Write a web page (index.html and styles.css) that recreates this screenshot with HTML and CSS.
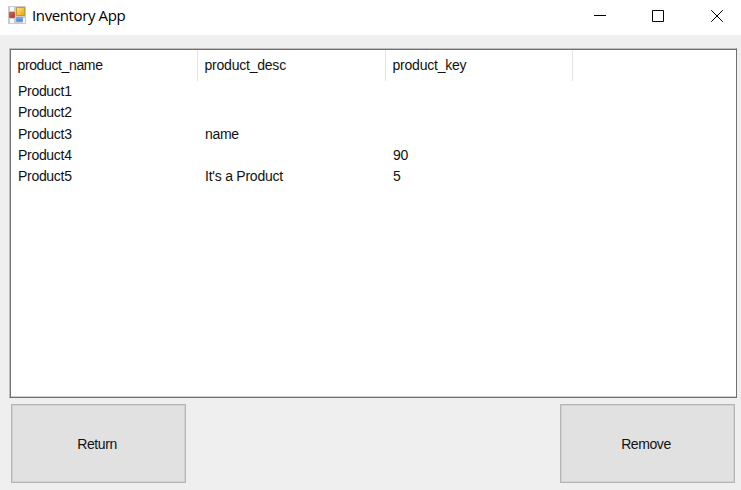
FILE: index.html
```
<!DOCTYPE html>
<html lang="en">
<head>
<meta charset="utf-8">
<title>Inventory App</title>
<link rel="stylesheet" href="styles.css">
</head>
<body>
<header class="titlebar">
  <svg class="app-icon" width="18" height="18" viewBox="0 0 18 18">
    <defs>
      <linearGradient id="gold" x2="1" y2="1"><stop stop-color="#ffe486"/><stop offset="1" stop-color="#e8a400"/></linearGradient>
      <linearGradient id="red" x2="1" y2="1"><stop stop-color="#df6a58"/><stop offset="1" stop-color="#b32418"/></linearGradient>
      <linearGradient id="blue" x2="0" y2="1"><stop stop-color="#83b8fb"/><stop offset="1" stop-color="#3b78dc"/></linearGradient>
    </defs>
    <path fill="#cbcbcb" d="M0 0h18v18H0z"/>
    <path fill="#f7f7f7" d="M2 1h4v4H2zM2 13h4v4H2zM15 12h2v5h-2z"/>
    <path fill="url(#gold)" stroke="#c39a35" d="M8.500 1.500h8v8h-8z"/>
    <path fill="url(#red)" stroke="#b8584a" d="M1.500 6.500h5v5h-5z"/>
    <path fill="url(#blue)" stroke="#7aa2e0" d="M8.500 11.500h6v4h-6z"/>
  </svg>
  <h1 class="title">Inventory App</h1>
  <div class="controls">
    <svg width="12" height="12" viewBox="0 0 12 12"><path d="M0 5.500h12"/></svg>
    <svg width="12" height="12" viewBox="0 0 12 12"><path d="M.5.500h11v11H.5z"/></svg>
    <svg class="close" width="12" height="12" viewBox="0 0 12 12"><path d="M.2.200l11.600 11.600M11.800.200L.2 11.800"/></svg>
  </div>
</header>
<main class="content">
  <section class="list">
    <div class="row head"><span>product_name</span><span class="desc">product_desc</span><span class="desc">product_key</span></div>
    <div class="row"><span>Product1</span></div>
    <div class="row"><span>Product2</span></div>
    <div class="row"><span>Product3</span><span>name</span></div>
    <div class="row"><span>Product4</span><span></span><span>90</span></div>
    <div class="row"><span>Product5</span><span class="phrase">It's a Product</span><span>5</span></div>
  </section>
  <div class="actions">
    <button>Return</button>
    <button>Remove</button>
  </div>
</main>
</body>
</html>
```
FILE: styles.css
```
* { box-sizing: border-box; }
body {
  margin: 0;
  width: 741px;
  height: 490px;
  overflow: hidden;
  background: #efefef;
  color: #111;
  font: 14px "Liberation Sans", Arial, sans-serif;
}
.titlebar {
  display: flex;
  align-items: flex-start;
  height: 35px;
  padding: 6px 18px 0 8px;
  background: #fff;
}
.title {
  margin: -1px 0 0 6px;
  font: 15px/20px "Open Sans", sans-serif;
  letter-spacing: -.38px;
  color: #000;
}
.controls {
  display: flex;
  gap: 46px;
  margin: 4px 0 0 auto;
}
.controls svg { fill: none; stroke: #000; stroke-width: 1; }
.controls .close { margin-left: 1px; }
.content { padding: 13px 4px 0 9px; }
.list {
  height: 350px;
  border: 1px solid #bdbdbd;
  border-right-color: #707070;
  border-bottom-color: #707070;
  box-shadow: inset 1px 1px #707070, inset 0 -1px #cfcfcf;
  background: #fff;
  padding: 1px 0 0 1px;
}
.row {
  display: grid;
  grid-template-columns: 187px 188px 187px;
  height: 21.3px;
  line-height: 21px;
  letter-spacing: -.3px;
}
.row span { padding-left: 7px; white-space: nowrap; }
.row.head { height: 30px; line-height: 31px; letter-spacing: -.37px; margin-bottom: 1px; }
.head span { border-right: 1px solid #e4e4e4; padding-left: 6.500px; }
.head .desc { letter-spacing: -.22px; }
.row .phrase { letter-spacing: -.24px; }
.actions {
  display: flex;
  justify-content: space-between;
  padding: 6px 2px 0 2px;
}
button {
  width: 175px;
  height: 79px;
  border: 1px solid #b5b5b5;
  border-radius: 0;
  box-shadow: inset 0 0 0 1px #d2d2d2;
  background: #e1e1e1;
  color: #111;
  font: 14px "Liberation Sans", Arial, sans-serif;
  letter-spacing: -.4px;
  padding: 0 3px 0 0;
}
```
